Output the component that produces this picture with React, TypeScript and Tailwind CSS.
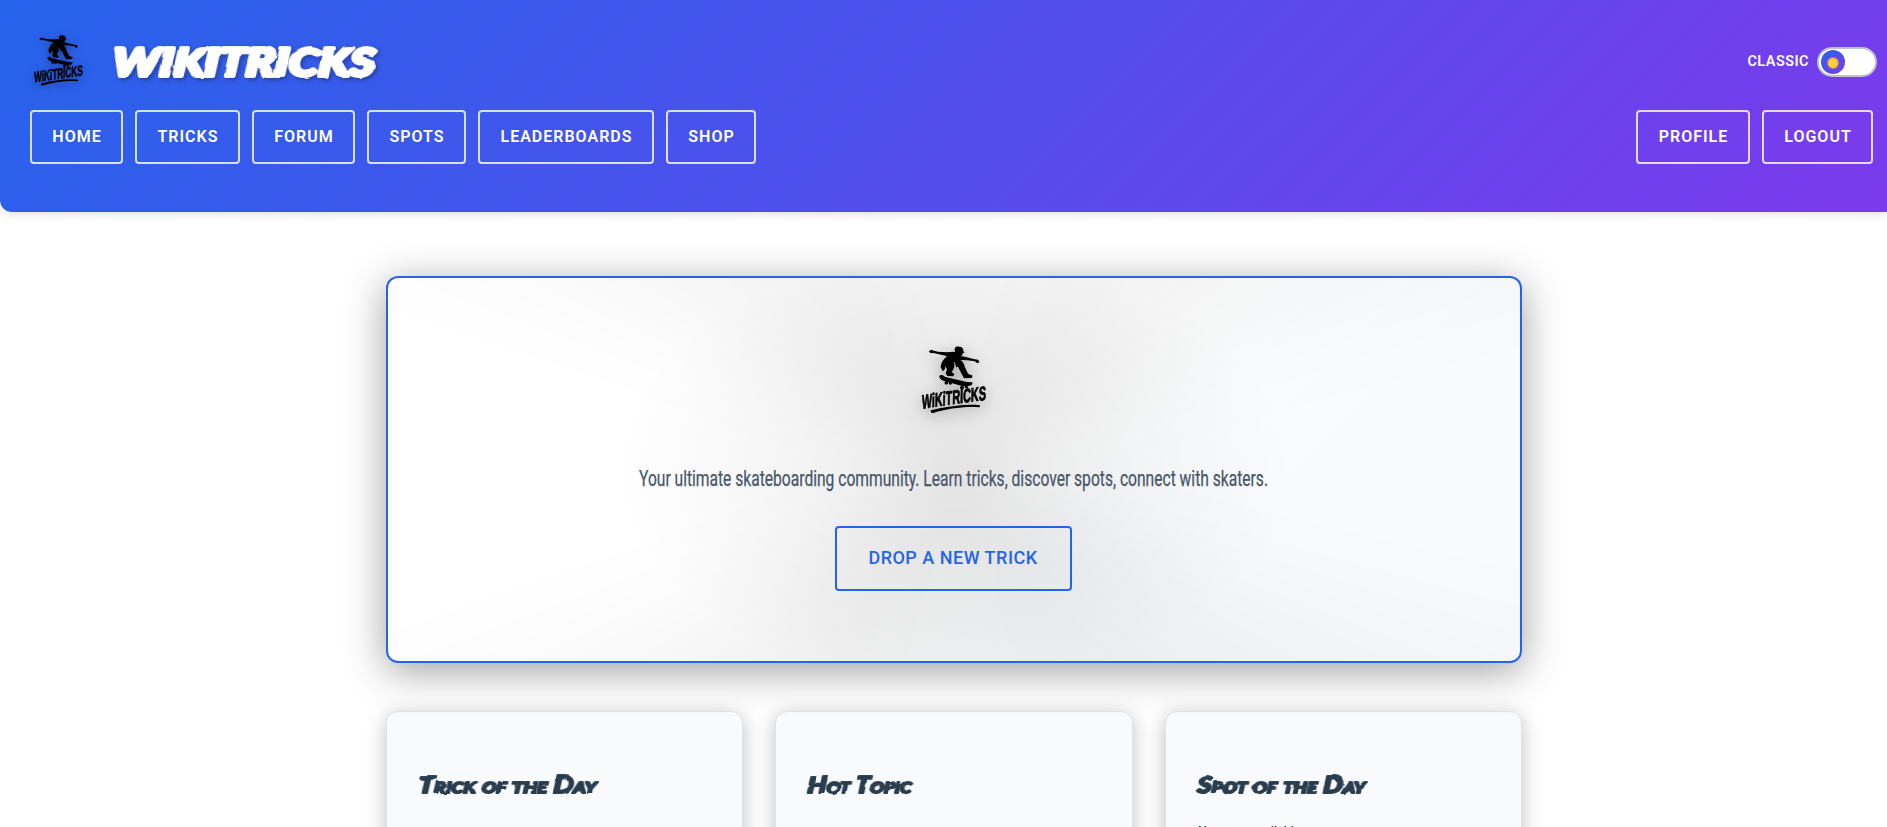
import React from "react";

function Logo({ className }: { className: string }) {
  return (
    <svg viewBox="55 45 210 210" className={"overflow-visible " + className} fill="#000" stroke="none">
      <path d="M84 64 L92 59 L100 62 L112 65 L140 67 L158 65 L164 66 C158 54 166 48 175 50 C184 50 189 56 188 63 L192 68 L186 69 C186 75 184 78 179 78 L196 81 L218 87 L232 89 L237 96 L230 100 L222 94 L200 91 L184 90 L170 96 L150 97 L138 92 L146 80 L128 76 L108 71 L98 69 L90 70 Z" />
      <path d="M144 76 C130 84 121 98 120 112 L126 124 L133 117 C134 103 140 96 152 94 L156 78 Z" />
      <path d="M138 97 L155 94 C163 99 163 108 158 118 L153 127 L161 132 L158 139 L140 138 L135 130 L139 118 L133 108 Z" />
      <path d="M154 90 L176 90 C186 92 190 101 192 110 L202 131 L216 137 L213 144 L190 145 L183 132 L172 110 L166 112 C166 102 162 96 154 90 Z" />
      <path d="M116 139 C119 132 128 135 134 141 L186 153 C197 157 206 156 216 157 L213 165 C199 171 188 169 176 166 L134 154 C122 151 117 147 116 139 Z" />
      <circle cx="137" cy="158" r="5.5" />
      <circle cx="149" cy="159" r="5" />
      <circle cx="184" cy="173" r="6" />
      <circle cx="197" cy="170" r="5" />
      <g transform="translate(63 236) rotate(-8) skewX(-9)">
        <text
          x="0"
          y="0"
          textLength="282"
          lengthAdjust="spacingAndGlyphs"
          transform="scale(.69 1)"
          fontSize="58"
          className="[font-family:'Liberation_Sans',sans-serif] font-bold"
          stroke="#000"
          strokeWidth="2.5"
          strokeLinejoin="round"
        >
          WiKiTRICKS
        </text>
      </g>
      <path d="M91 241 C138 230 190 221 238 226 L237 232 C185 229 142 236 98 249 C91 250 88 244 91 241 Z" />
    </svg>
  );
}

function NavButton({ label, width }: { label: string; width: string }) {
  return (
    <button
      className={
        "h-[54px] shrink-0 rounded border-2 border-white/80 pl-px text-center text-[16px] font-semibold tracking-[1px] text-white " +
        width
      }
    >
      {label}
    </button>
  );
}

const leftNav = [
  { label: "HOME", width: "w-[93px]" },
  { label: "TRICKS", width: "w-[105px]" },
  { label: "FORUM", width: "w-[103px]" },
  { label: "SPOTS", width: "w-[99px]" },
  { label: "LEADERBOARDS", width: "w-[176px]" },
  { label: "SHOP", width: "w-[90px]" },
];

const rightNav = [
  { label: "PROFILE", width: "w-[114px]" },
  { label: "LOGOUT", width: "w-[111px]" },
];

const cards = [
  { title: "Trick of the Day", length: 182, body: "" },
  { title: "Hot Topic", length: 108, body: "" },
  { title: "Spot of the Day", length: 172, body: "No spots available." },
];

function MarkerText({
  text,
  length,
  size,
  stroke,
  className,
}: {
  text: string;
  length: number;
  size: number;
  stroke: number;
  className: string;
}) {
  return (
    <svg width={length + 8} height={size * 1.4} className={"overflow-visible " + className}>
      <g transform={`translate(1 ${size}) skewX(-4)`} filter="url(#rough)">
        <text
          textLength={length - 4}
          lengthAdjust="spacingAndGlyphs"
          fontSize={size}
          fill="currentColor"
          stroke="currentColor"
          strokeWidth={stroke}
          strokeLinejoin="round"
          strokeLinecap="round"
          className="[font-family:Lato,sans-serif] font-black italic [font-variant-caps:small-caps]"
        >
          {text}
        </text>
      </g>
    </svg>
  );
}

export default function App() {
  return (
    <div className="h-[827px] w-full overflow-hidden bg-white [font-family:Roboto,sans-serif]">
      <svg className="absolute" width="0" height="0">
        <filter id="rough" x="-5%" y="-20%" width="110%" height="140%">
          <feTurbulence type="fractalNoise" baseFrequency="0.09" numOctaves="1" seed="4" result="n" />
          <feDisplacementMap in="SourceGraphic" in2="n" scale="3" xChannelSelector="R" yChannelSelector="G" />
        </filter>
      </svg>
      <header className="flex h-[212px] flex-col rounded-bl-xl bg-[linear-gradient(135deg,#2563eb_0%,#7c3aed_100%)] shadow-[0_2px_10px_rgba(0,0,0,0.12)]">
        <div className="flex h-[110px] items-center pt-[13px] pl-[32px]">
          <Logo className="mt-[-3px] h-[53px] w-[53px] shrink-0 drop-shadow-[0_2px_4px_rgba(0,0,0,0.3)]" />
          <MarkerText
            text="WIKITRICKS"
            length={266}
            size={38}
            stroke={3.8}
            className="mt-[7px] ml-[26px] text-white drop-shadow-[2px_2px_2px_rgba(0,0,0,0.3)]"
          />
          <div className="mr-[10px] ml-auto flex items-center gap-[8px]">
            <span className="text-[14.4px] font-semibold tracking-[0.5px] text-white">CLASSIC</span>
            <div className="flex h-[30px] w-[60px] items-center rounded-full border-2 border-[#bdc3c7] bg-white pl-[2px]">
              <div className="flex h-6 w-6 items-center justify-center rounded-full bg-[linear-gradient(135deg,#2563eb,#7c3aed)] pt-[3px]">
                <svg width="12" height="12" viewBox="0 0 12 12">
                  <circle cx="6" cy="6" r="5.2" fill="#ffcf3d" stroke="#f6893b" strokeWidth="1.4" strokeDasharray="1.4 .6" />
                </svg>
              </div>
            </div>
          </div>
        </div>
        <nav className="flex justify-between pr-[14px] pl-[30px]">
          <div className="flex gap-3">
            {leftNav.map((n) => (
              <NavButton key={n.label} {...n} />
            ))}
          </div>
          <div className="flex gap-3">
            {rightNav.map((n) => (
              <NavButton key={n.label} {...n} />
            ))}
          </div>
        </nav>
      </header>

      <main className="ml-[386px] w-[1136px] pt-16">
        <section className="relative flex h-[387px] flex-col items-center overflow-visible rounded-xl border-2 border-[#2563eb] bg-[linear-gradient(135deg,#ffffff_50%,#f8fafc_75%)] shadow-[0_8px_40px_rgba(0,0,0,0.38)]">
          <div className="absolute inset-0 overflow-hidden rounded-[10px]">
            <div className="absolute -inset-16 bg-[conic-gradient(from_0deg_at_50%_50%,rgba(0,0,0,0.035)_0deg,rgba(0,0,0,0.05)_40deg,rgba(0,0,0,0.03)_58deg,rgba(0,0,0,0)_78deg,rgba(0,0,0,0)_100deg,rgba(0,0,0,0.035)_122deg,rgba(0,0,0,0.055)_145deg,rgba(0,0,0,0.045)_180deg,rgba(0,0,0,0.06)_218deg,rgba(0,0,0,0.03)_236deg,rgba(0,0,0,0)_254deg,rgba(0,0,0,0)_286deg,rgba(0,0,0,0.035)_306deg,rgba(0,0,0,0.05)_325deg,rgba(0,0,0,0.035)_360deg)] blur-[32px]" />
            <div className="absolute inset-0 bg-[radial-gradient(ellipse_340px_220px_at_50%_50%,rgba(0,0,0,0.075),rgba(0,0,0,0.045)_45%,transparent)]" />
          </div>
          <Logo className="relative mt-[67px] h-[70px] w-[70px] shrink-0 drop-shadow-[0_4px_8px_rgba(0,0,0,0.3)]" />
          <svg width="640" height="40" className="relative mt-[43px] shrink-0 overflow-visible">
            <text
              x="5"
              y="28"
              textLength="629"
              lengthAdjust="spacingAndGlyphs"
              fontSize="21.5"
              fill="#475569"
              stroke="#475569"
              strokeWidth="0.25"
              className="[font-family:Roboto,sans-serif] font-normal"
            >
              Your ultimate skateboarding community. Learn tricks, discover spots, connect with skaters.
            </text>
          </svg>
          <button className="relative mt-[28px] mr-[2px] h-[65px] w-[237px] shrink-0 rounded border-2 border-[#2563eb] pb-[2px] text-[18px] font-medium tracking-[0.5px] text-[#2563eb]">
            DROP A NEW TRICK
          </button>
        </section>
        <div className="mt-12 grid grid-cols-3 gap-8">
          {cards.map((c) => (
            <article
              key={c.title}
              className="h-[300px] rounded-xl border border-[#dfe2e6] bg-[#f8fafc] px-[30px] pt-[59px] shadow-[0_4px_20px_rgba(0,0,0,0.25)]"
            >
              <MarkerText text={c.title} length={c.length} size={22} stroke={1.9} className="text-[#2c3e50]" />
              <p className="mt-[15px] ml-[2px] w-fit origin-left scale-x-[0.78] text-[16px] font-medium leading-[32px] text-[#2c3e50]">
                {c.body}
              </p>
            </article>
          ))}
        </div>
      </main>
    </div>
  );
}
